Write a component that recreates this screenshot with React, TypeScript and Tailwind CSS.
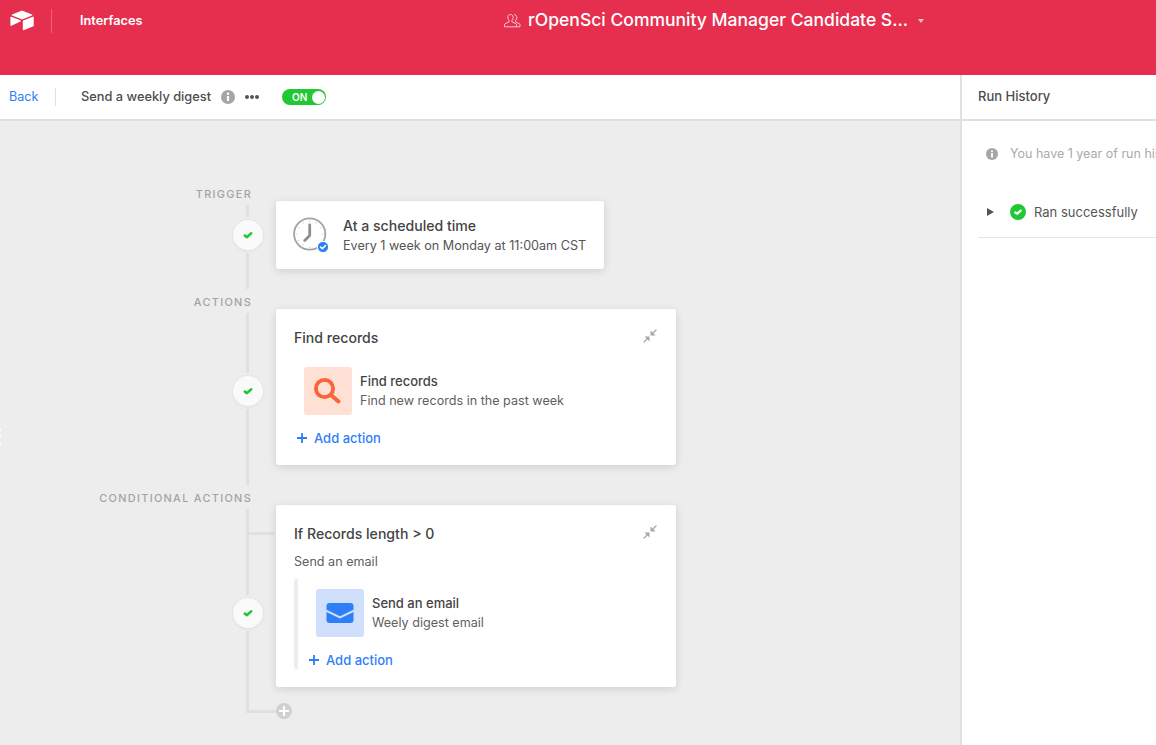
import type { ReactNode } from "react";

const BLUE = "#2d7ff9";

const Logo = () => (
  <svg width="24" height="21" viewBox="8 8 182 154" fill="#fff">
    <path d="M90.04 12.37L24.08 39.66C20.41 41.18 20.45 46.39 24.14 47.85L90.38 74.12C96.2 76.43 102.68 76.43 108.5 74.12L174.73 47.85C178.42 46.39 178.46 41.18 174.79 39.66L108.83 12.37C102.82 9.88 96.06 9.88 90.04 12.37Z" />
    <path d="M105.31 88.46V154.08C105.31 157.2 108.46 159.34 111.36 158.19L185.17 129.54C186.85 128.87 187.96 127.24 187.96 125.43V59.81C187.96 56.69 184.81 54.56 181.91 55.71L108.1 84.35C106.42 85.02 105.31 86.65 105.31 88.46Z" />
    <path d="M88.08 91.85L66.17 102.42L63.95 103.5L17.71 125.65C14.78 127.07 11.04 124.93 11.04 121.67V60.09C11.04 58.91 11.64 57.89 12.45 57.13C12.79 56.79 13.18 56.51 13.57 56.29C14.68 55.62 16.25 55.45 17.59 55.98L87.71 83.76C91.27 85.17 91.55 90.17 88.08 91.85Z" />
  </svg>
);

const PeopleIcon = () => (
  <svg width="17" height="16" viewBox="0 0 17 16" fill="none" stroke="#fff" strokeOpacity="0.8" strokeWidth="0.9">
    <path d="M6.5 1.5c-1.7 0-2.7 1.2-2.7 3 0 1.3.6 2.4 1.3 3v1.3L1 10.8c-.4.2-.5.5-.5.9v2.1h12v-2.1c0-.4-.1-.7-.5-.9L7.9 8.8V7.5c.7-.6 1.3-1.7 1.3-3 0-1.8-1-3-2.7-3z" />
    <path d="M10.2 1.6c1.6.1 2.6 1.2 2.6 2.9 0 1.3-.6 2.4-1.3 3v1.3l4 2c.4.2.5.5.5.9v2.1h-3" />
  </svg>
);

const InfoIcon = ({ size = 14 }: { size?: number }) => (
  <svg className="shrink-0" width={size} height={size} viewBox="0 0 14 14">
    <circle cx="7" cy="7" r="7" fill="#a6a6a6" />
    <circle cx="7" cy="3.8" r="1.2" fill="#fff" />
    <rect x="5.9" y="5.9" width="2.2" height="5.2" rx="0.4" fill="#fff" />
  </svg>
);

const Check = ({ color = "#20c933", size = 12 }: { color?: string; size?: number }) => (
  <svg width={size} height={size} viewBox="0 0 12 12" fill="none" stroke={color} strokeWidth="2.6" strokeLinecap="round" strokeLinejoin="round">
    <path d="M2.8 6.6l2.2 1.5 4.2-3.8" />
  </svg>
);

const ClockIcon = () => (
  <svg width="36" height="36" viewBox="0 0 36 36" fill="none">
    <circle cx="16.7" cy="17" r="15.6" stroke="#a3a3a3" strokeWidth="1.8" />
    <g stroke="#d4d4d4" strokeWidth="1" strokeLinecap="round">
      <path d="M16.7 3.5v1M16.7 29.5v1M3.200 17h1M29.200 17h1M9.900 5.300l.5.9M23.500 5.300l-.5.9M5 10.200l.9.5M28.400 10.200l-.9.5M5 23.800l.9-.5M9.900 28.700l.5-.9" />
    </g>
    <path d="M16.7 8V18.500L11.700 23.500" stroke="#8f8f8f" strokeWidth="2.8" strokeLinecap="round" strokeLinejoin="round" />
    <circle cx="30" cy="30" r="5.600" fill={BLUE} stroke="#fff" strokeWidth="1" />
    <path d="M27.500 30.200l1.800 1.400 3.200-3" stroke="#fff" strokeWidth="1.600" strokeLinecap="round" strokeLinejoin="round" />
  </svg>
);

const CollapseIcon = () => (
  <svg width="14" height="14" viewBox="0 0 14 14" fill="#a6a6a6" stroke="#a6a6a6" strokeLinecap="round">
    <path d="M7.500 1.500V6.500h5z" strokeWidth="0" />
    <path d="M10 4l3-3" strokeWidth="1.200" />
    <path d="M6.500 12.500V7.500h-5z" strokeWidth="0" />
    <path d="M4 10l-3 3" strokeWidth="1.200" />
  </svg>
);

const SearchIcon = () => (
  <svg width="28" height="28" viewBox="0 0 28 28" fill="none" stroke="#f7653b" strokeLinecap="round">
    <circle cx="10.5" cy="11.5" r="8.600" strokeWidth="3.800" />
    <path d="M17.500 18.500L24.500 24.500" strokeWidth="4" />
  </svg>
);

const MailIcon = () => (
  <svg width="28" height="20" viewBox="0 0 28 20">
    <path d="M3.500 0h21a3 3 0 013 3v3.700L14 13.300 .5 6.700V3a3 3 0 013-3z" fill={BLUE} />
    <path d="M.5 8.900L14 15.500l13.500-6.600V17a3 3 0 01-3 3h-21a3 3 0 01-3-3z" fill={BLUE} />
  </svg>
);

const Plus = () => (
  <svg width="10" height="10" viewBox="0 0 10 10" stroke={BLUE} strokeWidth="1.8">
    <path d="M5 0v10M0 5h10" />
  </svg>
);

const AddAction = () => (
  <div className="flex items-center gap-[7px] text-[13px] leading-[18px] font-medium text-[#2d7ff9]">
    <Plus />
    <span>Add action</span>
  </div>
);

const StepText = ({ title, sub, className }: { title: string; sub: string; className: string }) => (
  <div className={`flex flex-col gap-[2px] leading-[18px] ${className}`}>
    <span className="text-[13px] font-medium text-[#444444]">{title}</span>
    <span className="text-[12.6px] text-[#5f5f5f]">{sub}</span>
  </div>
);

const Rail = ({ top, bottom, children }: { top: string; bottom: string; children?: ReactNode }) => (
  <div className="relative mr-[13px] flex w-[30px] flex-col items-center gap-[3px]">
    <div className={`mr-[1px] w-[3px] bg-[#e0e0e0] ${top}`} />
    <div className="flex h-[30px] w-[30px] items-center justify-center rounded-full bg-[#fafafa] shadow-[0_0_0_1px_#e6e6e6,0_1px_3px_rgba(0,0,0,0.08)]">
      <Check />
    </div>
    <div className={`mr-[1px] w-[3px] bg-[#e0e0e0] ${bottom}`} />
    {children}
  </div>
);

const Label = ({ children }: { children: string }) => (
  <div className="h-[14px] pr-[24px] text-right text-[10.9px] leading-[15px] font-medium tracking-[0.12em] text-[#a3a3a3]">
    {children}
  </div>
);

const Card = ({ className, children }: { className: string; children: ReactNode }) => (
  <div className={`rounded-[3px] bg-white shadow-[0_2px_8px_rgba(0,0,0,0.13)] ${className}`}>{children}</div>
);

export default function App() {
  return (
    <div className="flex h-[745px] w-[1156px] flex-col overflow-hidden bg-[#ededed] font-['Inter',sans-serif] text-[#444444]">
      {/* top bar */}
      <header className="relative h-[75px] shrink-0 bg-[#e62f4f]">
        <div className="flex h-[41px] items-center text-white">
          <div className="ml-[10px] w-[41px]">
            <Logo />
          </div>
          <div className="h-[24px] w-[1px] bg-white/25" />
          <span className="mt-[1px] ml-[28px] text-[12.75px] font-semibold">Interfaces</span>
          <div className="absolute left-[504px] top-0 flex h-[41px] items-center">
            <PeopleIcon />
            <span className="ml-[7px] text-[17.55px] font-medium whitespace-nowrap">
              rOpenSci Community Manager Candidate S...
            </span>
            <div className="ml-[10px] h-0 w-0 border-x-[3.5px] border-t-[4px] border-x-transparent border-t-white/70" />
          </div>
        </div>
      </header>

      <div className="flex min-h-0 flex-1">
        <div className="flex w-[960px] shrink-0 flex-col">
          {/* toolbar */}
          <div className="flex h-[46px] shrink-0 items-center border-b-2 border-[#e0e0e0] bg-white">
            <span className="ml-[9px] w-[29px] text-[12.6px] text-[#2d7ff9]">Back</span>
            <div className="ml-[17px] h-[18px] w-[1px] bg-[#e0e0e0]" />
            <span className="ml-[25px] w-[130px] text-[12.8px] font-medium whitespace-nowrap text-[#4d4d4d]">Send a weekly digest</span>
            <div className="ml-[10px]">
              <InfoIcon />
            </div>
            <div className="ml-[10px] flex gap-[1px]">
              <i className="h-[4px] w-[4px] rounded-full bg-[#555555]" />
              <i className="h-[4px] w-[4px] rounded-full bg-[#555555]" />
              <i className="h-[4px] w-[4px] rounded-full bg-[#555555]" />
            </div>
            <div className="ml-[23px] flex h-[16px] w-[44px] items-center justify-between rounded-full bg-[#20c933] pr-[1.5px] pl-[10px]">
              <span className="text-[10px] font-semibold text-white">ON</span>
              <i className="h-[13px] w-[13px] rounded-full bg-white" />
            </div>
          </div>

          {/* workflow canvas */}
          <div className="relative flex flex-1 flex-col gap-[6px] pt-[66px]">
            <div className="absolute top-[307px] left-0 flex flex-col gap-[4px]">
              <i className="h-[3px] w-[1px] bg-white/80" />
              <i className="h-[3px] w-[1px] bg-white/80" />
              <i className="h-[3px] w-[1px] bg-white/80" />
            </div>

            <section className="flex">
              <div className="flex w-[276px] shrink-0 flex-col items-end">
                <Label>TRIGGER</Label>
                <div className="mt-[4px]">
                  <Rail top="h-[12px]" bottom="h-[36px]" />
                </div>
              </div>
              <div className="pt-[14px]">
                <Card className="flex h-[68px] w-[328px] items-center pl-[17px]">
                  <ClockIcon />
                  <div className="ml-[14px] flex flex-col gap-[1px]">
                    <span className="text-[14.1px] leading-[20px] font-medium text-[#444444]">At a scheduled time</span>
                    <span className="text-[12.62px] leading-[18px] text-[#555555]">Every 1 week on Monday at 11:00am CST</span>
                  </div>
                </Card>
              </div>
            </section>

            <section className="flex">
              <div className="flex w-[276px] shrink-0 flex-col items-end">
                <Label>ACTIONS</Label>
                <div className="mt-[4px]">
                  <Rail top="h-[60px]" bottom="h-[76px]" />
                </div>
              </div>
              <div className="pt-[14px]">
                <Card className="relative h-[156px] w-[400px] px-[18px] pt-[19px]">
                  <div className="text-[14.1px] leading-[20px] font-medium">Find records</div>
                  <div className="absolute top-[20px] right-[19px]">
                    <CollapseIcon />
                  </div>
                  <div className="mt-[19px] ml-[10px] flex items-center gap-[8px]">
                    <div className="flex h-[48px] w-[48px] items-center justify-center rounded-[3px] bg-[#ffe0d5]">
                      <SearchIcon />
                    </div>
                    <StepText className="mb-[1px]" title="Find records" sub="Find new records in the past week" />
                  </div>
                  <div className="mt-[14px] ml-[3px]">
                    <AddAction />
                  </div>
                </Card>
              </div>
            </section>

            <section className="flex">
              <div className="flex w-[276px] shrink-0 flex-col items-end">
                <Label>CONDITIONAL ACTIONS</Label>
                <div className="mt-[4px]">
                  <Rail top="h-[86px]" bottom="h-[82px]">
                    <div className="absolute top-[23px] left-[16px] h-[3px] w-[25px] bg-[#e0e0e0]" />
                    <div className="absolute top-[201px] left-[16px] h-[3px] w-[27px] bg-[#e0e0e0]" />
                    <div className="absolute top-[194px] left-[43px] flex h-[16px] w-[16px] items-center justify-center rounded-full bg-[#d0d0d0]">
                      <svg width="10" height="10" viewBox="0 0 10 10" stroke="#fff" strokeWidth="2.2">
                        <path d="M5 0v10M0 5h10" />
                      </svg>
                    </div>
                  </Rail>
                </div>
              </div>
              <div className="pt-[14px]">
                <Card className="relative h-[182px] w-[400px] px-[18px] pt-[19px]">
                  <div className="text-[14.1px] leading-[20px] font-medium">If Records length &gt; 0</div>
                  <div className="absolute top-[20px] right-[19px]">
                    <CollapseIcon />
                  </div>
                  <div className="mt-[9px] text-[12.6px] leading-[18px] text-[#5f5f5f]">Send an email</div>
                  <div className="mt-[8px] h-[90px] rounded-[2px] border-l-4 border-[#ededed] pt-[10px] pl-[18px]">
                    <div className="flex items-center gap-[8px]">
                      <div className="flex h-[48px] w-[48px] items-center justify-center rounded-[3px] bg-[#cfdffc]">
                        <MailIcon />
                      </div>
                      <StepText className="" title="Send an email" sub="Weely digest email" />
                    </div>
                    <div className="mt-[14px] -ml-[7px]">
                      <AddAction />
                    </div>
                  </div>
                </Card>
              </div>
            </section>
          </div>
        </div>

        {/* run history */}
        <aside className="min-w-0 flex-1 overflow-hidden border-l-2 border-[#e0e0e0] bg-white">
          <div className="flex h-[46px] items-center border-b-2 border-[#e0e0e0] pl-[16px] text-[13px] font-medium text-[#4d4d4d]">
            Run History
          </div>
          <div className="mt-[24px] flex items-center pl-[24px] whitespace-nowrap">
            <InfoIcon size={12} />
            <span className="ml-[12px] text-[12.5px] text-[#aaaaaa]">You have 1 year of run history</span>
          </div>
          <div className="mt-[40px] ml-[16px] flex h-[34px] items-center border-b border-[#e5e5e5] pb-[16px] pl-[9px]">
            <div className="h-0 w-0 border-y-[4px] border-l-[7px] border-y-transparent border-l-[#555555]" />
            <div className="ml-[16px] flex h-[16px] w-[16px] items-center justify-center rounded-full bg-[#20c933]">
              <Check color="#fff" size={10} />
            </div>
            <span className="ml-[8px] text-[13px] text-[#555555]">Ran successfully</span>
          </div>
        </aside>
      </div>
    </div>
  );
}
